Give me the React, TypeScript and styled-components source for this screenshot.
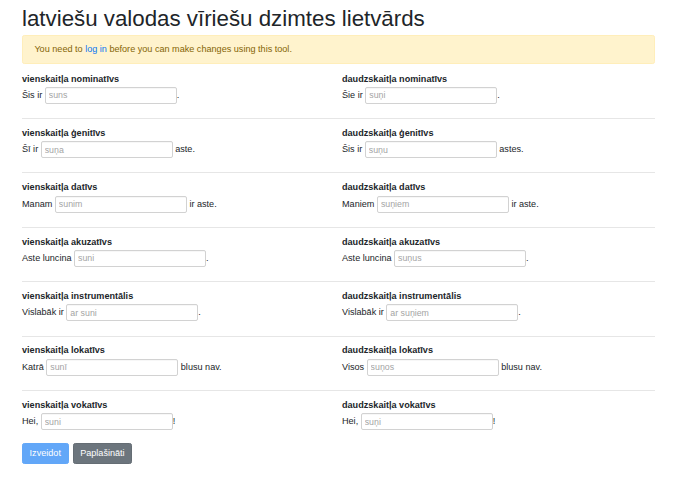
import React from "react";
import styled, { createGlobalStyle } from "styled-components";

const GlobalStyle = createGlobalStyle`
  html, body {
    margin: 0;
    padding: 0;
    background: #ffffff;
  }
  body {
    font-family: "Liberation Sans", Arial, Helvetica, sans-serif;
    font-size: 9.1px;
    line-height: 13.7px;
    color: #212529;
  }
`;

const Page = styled.main`
  width: 633px;
  padding: 6px 0 0 22px;
`;

const Title = styled.h1`
  margin: 0 0 3px;
  font-size: 22.3px;
  line-height: 26px;
  font-weight: 400;
  color: #212529;
  letter-spacing: 0;
`;

const Alert = styled.div`
  box-sizing: border-box;
  height: 28.5px;
  padding: 6.8px 11.4px;
  margin-bottom: 8px;
  background: #fff3cd;
  border: 1px solid #ffeeba;
  border-radius: 2.3px;
  color: #856404;
  font-size: 9.1px;
  line-height: 13.7px;
`;

const AlertLink = styled.a`
  color: #0a76f0;
  text-decoration: none;
`;

const Row = styled.div`
  display: grid;
  grid-template-columns: 320px 1fr;
`;

const Field = styled.div`
  display: flex;
  flex-direction: column;
`;

const Label = styled.label`
  display: block;
  font-weight: 700;
  line-height: 14px;
  height: 14px;
  white-space: nowrap;
`;

const Sentence = styled.div`
  margin-top: 1.3px;
  height: 17px;
  line-height: 17px;
  white-space: nowrap;
`;

const Input = styled.input`
  box-sizing: border-box;
  vertical-align: top;
  width: 132px;
  height: 17px;
  margin: 0;
  padding: 0 3px;
  border: 1px solid #d2d2d2;
  border-radius: 2px;
  background: #ffffff;
  box-shadow: inset 0 1px 0 rgba(0, 0, 0, 0.03);
  font-family: "Liberation Sans", Arial, Helvetica, sans-serif;
  font-size: 8.8px;
  color: #495057;
  outline: none;

  &::placeholder {
    color: #a4a4a4;
    opacity: 1;
  }
`;

const Divider = styled.hr`
  margin: 14.3px 0 6.8px;
  border: 0;
  border-top: 1px solid #e6e6e6;
  height: 0;
`;

const Actions = styled.div`
  display: flex;
  gap: 4px;
  margin-top: 13.3px;
`;

const Button = styled.button<{ $variant: "primary" | "secondary" }>`
  box-sizing: border-box;
  height: 21px;
  padding: 0 6.6px;
  border-radius: 2.3px;
  font-family: "Liberation Sans", Arial, Helvetica, sans-serif;
  font-size: 9.1px;
  line-height: 19px;
  color: #ffffff;
  cursor: pointer;
  background: ${(p) => (p.$variant === "primary" ? "#62a7f8" : "#6c757d")};
  border: 1px solid ${(p) => (p.$variant === "primary" ? "#62a7f8" : "#656d74")};
`;

type Case = {
  label: string;
  before: string;
  placeholder: string;
  after: string;
};

const rows: [Case, Case][] = [
  [
    { label: "vienskaitļa nominatīvs", before: "Šis ir", placeholder: "suns", after: "." },
    { label: "daudzskaitļa nominatīvs", before: "Šie ir", placeholder: "suņi", after: "." },
  ],
  [
    { label: "vienskaitļa ģenitīvs", before: "Šī ir", placeholder: "suņa", after: " aste." },
    { label: "daudzskaitļa ģenitīvs", before: "Šis ir", placeholder: "suņu", after: " astes." },
  ],
  [
    { label: "vienskaitļa datīvs", before: "Manam", placeholder: "sunim", after: " ir aste." },
    { label: "daudzskaitļa datīvs", before: "Maniem", placeholder: "suņiem", after: " ir aste." },
  ],
  [
    { label: "vienskaitļa akuzatīvs", before: "Aste luncina", placeholder: "suni", after: "." },
    { label: "daudzskaitļa akuzatīvs", before: "Aste luncina", placeholder: "suņus", after: "." },
  ],
  [
    { label: "vienskaitļa instrumentālis", before: "Vislabāk ir", placeholder: "ar suni", after: "." },
    { label: "daudzskaitļa instrumentālis", before: "Vislabāk ir", placeholder: "ar suņiem", after: "." },
  ],
  [
    { label: "vienskaitļa lokatīvs", before: "Katrā", placeholder: "sunī", after: " blusu nav." },
    { label: "daudzskaitļa lokatīvs", before: "Visos", placeholder: "suņos", after: " blusu nav." },
  ],
  [
    { label: "vienskaitļa vokatīvs", before: "Hei,", placeholder: "suni", after: "!" },
    { label: "daudzskaitļa vokatīvs", before: "Hei,", placeholder: "suņi", after: "!" },
  ],
];

function CaseField({ c }: { c: Case }) {
  return (
    <Field>
      <Label>{c.label}</Label>
      <Sentence>
        {c.before} <Input type="text" placeholder={c.placeholder} />
        {c.after}
      </Sentence>
    </Field>
  );
}

export default function App() {
  return (
    <>
      <GlobalStyle />
      <Page>
        <Title>latviešu valodas vīriešu dzimtes lietvārds</Title>
        <Alert>
          You need to <AlertLink href="#">log in</AlertLink> before you can make changes using this tool.
        </Alert>
        <form onSubmit={(e) => e.preventDefault()}>
          {rows.map((pair, i) => (
            <React.Fragment key={i}>
              <Row>
                <CaseField c={pair[0]} />
                <CaseField c={pair[1]} />
              </Row>
              {i < rows.length - 1 && <Divider />}
            </React.Fragment>
          ))}
          <Actions>
            <Button type="submit" $variant="primary" disabled>
              Izveidot
            </Button>
            <Button type="button" $variant="secondary">
              Paplašināti
            </Button>
          </Actions>
        </form>
      </Page>
    </>
  );
}
